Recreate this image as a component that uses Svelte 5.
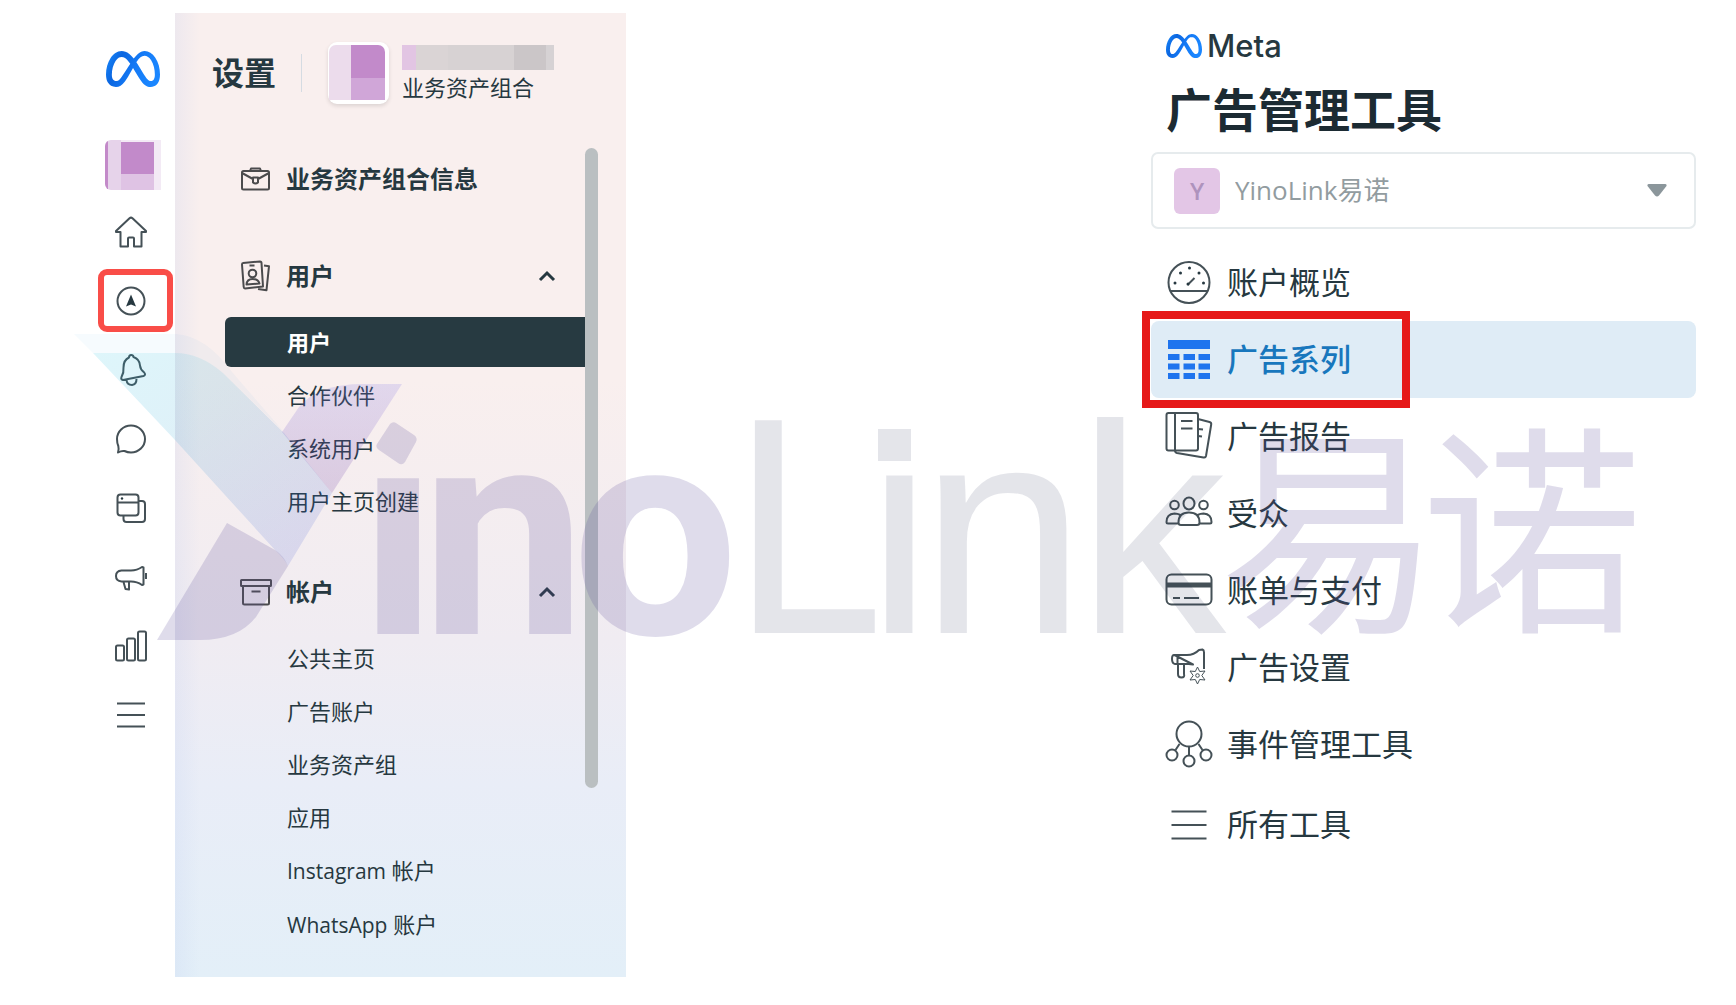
<script>
  const rail = ['home', 'compass', 'bell', 'chat', 'pages', 'megaphone', 'bars', 'menu'];
  const railLabels = ['主页', '广告', '通知', '消息', '内容', '推广', '成效', '菜单'];
  const groups = [
    {
      title: '用户',
      icon: 'badge',
      items: [
        { text: '用户', active: true },
        { text: '合作伙伴' },
        { text: '系统用户' },
        { text: '用户主页创建' }
      ]
    },
    {
      title: '帐户',
      icon: 'archive',
      items: [
        { text: '公共主页' },
        { text: '广告账户' },
        { text: '业务资产组' },
        { text: '应用' },
        { latin: 'Instagram', text: '帐户' },
        { latin: 'WhatsApp', text: '账户' }
      ]
    }
  ];
  const tools = [
    { icon: 'gauge', text: '账户概览' },
    { icon: 'table', text: '广告系列', active: true },
    { icon: 'report', text: '广告报告' },
    { icon: 'people', text: '受众' },
    { icon: 'card', text: '账单与支付' },
    { icon: 'adsettings', text: '广告设置' },
    { icon: 'events', text: '事件管理工具' },
    { icon: 'all', text: '所有工具' }
  ];
</script>

{#snippet meta(id)}
  <svg class="meta" viewBox="0 4 24 16" aria-hidden="true">
    <defs>
      <linearGradient {id} x1="0" y1="0" x2="1" y2="0.3">
        <stop offset="0" stop-color="#1a8cff" />
        <stop offset="0.3" stop-color="#0b66e0" />
        <stop offset="0.6" stop-color="#1479f5" />
        <stop offset="1" stop-color="#1a86ff" />
      </linearGradient>
    </defs>
    <path fill="url(#{id})" d="M6.915 4.03c-1.968 0-3.683 1.28-4.871 3.113C.704 9.208 0 11.883 0 14.449c0 .706.07 1.369.21 1.973a6.624 6.624 0 0 0 .265.86 5.297 5.297 0 0 0 .371.761c.696 1.159 1.818 1.927 3.593 1.927 1.497 0 2.633-.671 3.965-2.444.76-1.012 1.144-1.626 2.663-4.32l.756-1.339.186-.325c.061.1.121.196.183.3l2.152 3.595c.724 1.21 1.665 2.556 2.47 3.314 1.046.987 1.992 1.22 3.06 1.22 1.075 0 1.876-.355 2.455-.843a3.743 3.743 0 0 0 .81-.973c.542-.939.861-2.127.861-3.745 0-2.72-.681-5.357-2.084-7.45-1.282-1.912-2.957-2.93-4.716-2.93-1.047 0-2.088.467-3.053 1.308-.652.57-1.257 1.29-1.82 2.05-.69-.875-1.335-1.547-1.958-2.056-1.182-.966-2.315-1.303-3.454-1.303zm10.16 2.053c1.147 0 2.188.758 2.992 1.999 1.132 1.748 1.647 4.195 1.647 6.4 0 1.548-.368 2.9-1.839 2.9-.58 0-1.027-.23-1.664-1.004-.496-.601-1.343-1.878-2.832-4.358l-.617-1.028a44.908 44.908 0 0 0-1.255-1.98c.07-.109.141-.224.211-.327 1.12-1.667 2.118-2.602 3.358-2.602zm-10.201.553c1.265 0 2.058.791 2.675 1.446.307.327.737.871 1.234 1.579l-1.02 1.566c-.757 1.163-1.882 3.017-2.837 4.338-1.191 1.649-1.81 1.817-2.486 1.817-.524 0-1.038-.237-1.383-.794-.263-.426-.464-1.13-.464-2.046 0-2.221.63-4.535 1.66-6.088.454-.687.964-1.226 1.533-1.533a2.264 2.264 0 0 1 1.088-.285z" />
  </svg>
{/snippet}

{#snippet icon(name)}
  {#if name === 'home'}
    <svg class="i32" viewBox="0 0 32 32"><path d="M1 15 14.500 2.200q1.500-1.200 3 0L31 15v1h-4.500v14.500H19V22.500q0-1-1-1h-4q-1 0-1 1v8H5.500V16H1z" /></svg>
  {:else if name === 'compass'}
    <svg class="i32" viewBox="0 0 32 32"><circle cx="16" cy="16" r="13.500" /><path class="solid" d="M16 9.500 21 21.500 16 19.500 11 21.500z" /></svg>
  {:else if name === 'bell'}
    <svg class="i32" viewBox="0 0 32 32"><path d="M14 3.500q0-2.500 2.200-2.500 2 0 2.300 2 6 2 6.500 8.500.3 4 4.200 7 2 2.500-.7 3.500L8 26q-2.500-.5-1.500-3 2.500-4.500 2-9.500Q8.500 6 14 3.500zM11.500 26q.5 5 5.500 5 4.500-.5 4.500-6" /></svg>
  {:else if name === 'chat'}
    <svg class="i32" viewBox="0 0 32 32"><path d="M3 29.500q1.200-3 .3-6.500-1.300-3-1.300-7a14 13.500 0 1 1 14 13.500q-3.500 0-6.500-1.500-3-.5-6.500 1.500z" /></svg>
  {:else if name === 'pages'}
    <svg class="i32" viewBox="0 0 32 32"><rect x="2.500" y="2.500" width="21" height="21" rx="3" /><path d="M2.500 10.500h21M23.500 9h3.500q3 0 3 3v15q0 3-3 3H11.500q-3 0-3-3v-3" /><circle class="solid" cx="7" cy="6.500" r="1.200" /></svg>
  {:else if name === 'megaphone'}
    <svg class="i32" viewBox="0 0 32 32"><path d="M6.500 9.500H16q6 0 11-3.500l1.500.5v17l-1.500.5q-5-3.500-11-3.500H6.500Q1 20 1 15t5.500-5.500zM8.500 21l2 7 3.500.500V21M31 12v6" /></svg>
  {:else if name === 'bars'}
    <svg class="i32" viewBox="0 0 32 32"><rect x="1" y="15.500" width="8" height="15" rx="1.500" /><rect x="12" y="8.500" width="8" height="22" rx="1.500" /><rect x="23" y="1.500" width="8" height="29" rx="1.500" /></svg>
  {:else if name === 'menu'}
    <svg class="i32" viewBox="0 0 32 32"><path d="M2 4.500h28M2 16h28M2 27.500h28" /></svg>
  {:else if name === 'briefcase'}
    <svg class="i32" viewBox="0 0 32 32"><rect x="2" y="8" width="27" height="18.500" rx="1.500" /><path d="M10 8l1-2.500h9L21 8M2 10l11 6M29 10l-11 6M13 14.500h5v5q-2.500 2-5 0z" /></svg>
  {:else if name === 'badge'}
    <svg class="i32" viewBox="0 0 32 32"><path d="M3 3 20 1.500q1.500 0 1.500 1.500L23 26.500 5 28.500q-1.200 0-1.300-1.500L2 4.500Q2 3 3 3zM24 5.500l5 .7-2.500 24L18 29M9.500 5.500h5" /><circle cx="12.500" cy="13.500" r="3.800" /><path d="M6.500 24.500q.5-5.500 6-5.500t7 4.500z" /></svg>
  {:else if name === 'archive'}
    <svg class="i32" viewBox="0 0 32 32"><rect x="1" y="4" width="30" height="6" rx="0.500" /><path d="M3 10v17q0 1.500 1.500 1.500h23q1.500 0 1.500-1.500V10M11.500 15.500h9" /></svg>
  {:else if name === 'gauge'}
    <svg class="i48" viewBox="0 0 48 48"><circle cx="24" cy="24.500" r="20.500" /><path d="M6 33h36M22.500 27l7-7" /><g class="solid"><circle cx="24.500" cy="10" r="1.500" /><circle cx="15.500" cy="15" r="1.500" /><circle cx="34" cy="15" r="1.500" /><circle cx="10" cy="25" r="1.500" /><circle cx="38.500" cy="25" r="1.500" /><circle cx="23" cy="26" r="1.500" /></g></svg>
  {:else if name === 'table'}
    <svg class="i48 blue" viewBox="0 0 48 48"><path d="M3 5h42v9H3zM3 19h11.500v6H3zM18.500 19H30v6H18.500zM33.500 19H45v6H33.500zM3 28.500h11.500v6H3zM18.500 28.500H30v6H18.500zM33.500 28.500H45v6H33.500zM3 38h11.500v6H3zM18.500 38H30v6H18.500zM33.500 38H45v6H33.500z" /></svg>
  {:else if name === 'report'}
    <svg class="i48" viewBox="0 0 48 48"><rect x="1.500" y="1" width="31.500" height="37.500" rx="2" /><path d="M10 1v37.500M16 9h11.500M16 16.500h11.500M33 7l11.500 3q2 .500 1.700 2.500L41 44q-.5 2-2.500 1.500L12 41q-2-.5-2-2.500M33 17l5 .500M33 24l4 .500" /></svg>
  {:else if name === 'people'}
    <svg class="i48" viewBox="0 0 48 48"><ellipse cx="24" cy="14.500" rx="5.500" ry="6" /><circle cx="9.500" cy="16" r="4.300" /><circle cx="38.500" cy="16" r="4.300" /><path d="M13.500 33.500q0-10 10.500-10t10.500 10q0 2.500-2.500 2.500H16q-2.500 0-2.500-2.500zM15.500 26q-3-1.500-6-1.500-8 .5-8 8.500 0 1.500 1.500 1.500h10.500M32.500 26q3-1.500 6-1.500 8 .5 8 8.500 0 1.500-1.500 1.500H34.500" /></svg>
  {:else if name === 'card'}
    <svg class="i48" viewBox="0 0 48 48"><rect x="1.500" y="8.500" width="45" height="30" rx="5" /><path d="M8 32h7M19 32h15" /><path class="band" d="M1.500 19h45" /></svg>
  {:else if name === 'adsettings'}
    <svg class="i48" viewBox="0 0 48 48"><path d="M9.500 12H22q7 0 12-5l3.500-.5q1.500.5 1.500 3V26M28 21.500q-2-.5-4.500-.5H10Q7 20.500 7 16t2.500-4zM12.500 12v8M13 20.500V31q0 3.500 3.500 3.500T19 31V21" /><path class="thin" d="M32.500 24l2.200 4.500 5.300-.5-3.200 4.500 3.200 4.500-5.300-.5-2.200 4.500-2.200-4.500-5.300.5 3.200-4.500-3.200-4.500 5.300.5z" /><circle class="thin" cx="32.500" cy="32.500" r="1.800" /></svg>
  {:else if name === 'events'}
    <svg class="i48" viewBox="0 0 48 48"><circle cx="24" cy="14" r="12.500" /><path d="M24 26.500v9M14.500 24l-4 6M33.500 24l4 6" /><circle cx="7" cy="35" r="5.500" /><circle cx="41" cy="35" r="5.500" /><circle cx="24" cy="41" r="5.500" /></svg>
  {:else if name === 'all'}
    <svg class="i48" viewBox="0 0 48 48"><path d="M6.500 11.500h35M6.500 25h35M6.500 38.500h35" /></svg>
  {/if}
{/snippet}

<div class="page">
  <nav class="rail" aria-label="主导航">
    <div class="brand">{@render meta('meta-rail')}</div>
    <div class="mosaic"></div>
    {#each rail as name, n}
      <button class="rail-item" class:marked={name === 'compass'} aria-label={railLabels[n]}>
        {@render icon(name)}
      </button>
    {/each}
  </nav>

  <section class="settings">
    <header>
      <h1>设置</h1>
      <div class="avatar"><div class="avatar-fill"></div></div>
      <div class="account">
        <div class="redacted"></div>
        <span>业务资产组合</span>
      </div>
    </header>
    <div class="scroll">
      <nav aria-label="设置">
        <a class="head info" href="#info">{@render icon('briefcase')}<span>业务资产组合信息</span></a>
        {#each groups as g}
          <button class="head toggle" aria-expanded="true">
            {@render icon(g.icon)}<span>{g.title}</span>
            <svg class="chevron" viewBox="0 0 18 12"><path d="M2 10l7-7 7 7" /></svg>
          </button>
          <ul>
            {#each g.items as item}
              <li>
                <a href="#item" class:active={item.active}>
                  {#if item.latin}<span class="latin">{item.latin}</span>{' '}{/if}{item.text}
                </a>
              </li>
            {/each}
          </ul>
        {/each}
      </nav>
      <div class="thumb"></div>
    </div>
  </section>

  <section class="manager">
    <div class="meta-brand">{@render meta('meta-manager')}<span>Meta</span></div>
    <h2>广告管理工具</h2>
    <div class="picker">
      <span class="initial">Y</span>
      <select aria-label="账户"><option>YinoLink易诺</option></select>
      <svg class="caret" viewBox="0 0 20 13"><path d="M2 0h16q2 0 1.500 2L12 11.500q-2 2-4 0L.5 2Q0 0 2 0z" /></svg>
    </div>
    <nav aria-label="广告管理工具">
      {#each tools as t}
        <a href="#tool" class="tool" class:current={t.active}>{@render icon(t.icon)}<span>{t.text}</span></a>
      {/each}
    </nav>
  </section>

  <svg class="watermark" viewBox="0 0 1736 1005" aria-hidden="true">
    <defs>
      <linearGradient id="wm-blue" x1="0" y1="0" x2="0.9" y2="1">
        <stop offset="0" stop-color="#00b8dc" stop-opacity="0.13" />
        <stop offset="0.4" stop-color="#28a0d2" stop-opacity="0.15" />
        <stop offset="1" stop-color="#4650d2" stop-opacity="0.15" />
      </linearGradient>
      <linearGradient id="wm-violet" x1="0" y1="0" x2="0" y2="1">
        <stop offset="0" stop-color="#8278e6" stop-opacity="0.2" />
        <stop offset="1" stop-color="#6e3ca0" stop-opacity="0.2" />
      </linearGradient>
    </defs>
    <path class="wm-pale" d="M74 334H176Q206 336 232 372L284 432 223 373Q200 353 175 353H93z" />
    <path fill="url(#wm-blue)" d="M93 353H175Q200 353 223 373L284 433 332 493 288 566Q284 558 275 550L175 440z" />
    <path fill="url(#wm-violet)" d="M282 432 299 407Q318 384 363 384H402L332 493z" />
    <path class="wm-purple" d="M227 523 275 550Q284 556 288 566L256 617Q238 640 200 640H157z" />
    <path class="wm-purple" d="M390 424q3-3 6-1l18 12q4 3 2 7l-11 20q-3 4-7 1l-19-13q-4-3-2-6z" />
    <g class="wm-purple wm-bold">
      <text x="358" y="634">ı</text>
      <text x="421" y="634">n</text>
      <text x="572" y="634">o</text>
    </g>
    <g class="wm-grey">
      <text class="wm-cap" x="726" y="633">L</text>
      <text x="858" y="633">ı</text>
      <text x="920" y="633">n</text>
      <text x="1077" y="633">k</text>
      <path d="M878 429h33v32h-33z" />
    </g>
    <g class="wm-purple wm-cjk">
      <text x="1219" y="615">易</text>
      <text x="1421" y="615">诺</text>
    </g>
  </svg>
</div>

<style>
  :global(body) {
    margin: 0;
    background: #fff;
  }
  .page {
    position: relative;
    box-sizing: border-box;
    display: grid;
    grid-template-columns: 85px 451fr 525fr 545fr;
    align-items: start;
    min-height: 100vh;
    padding: 13px 40px 24px 90px;
    color: #263840;
    font-family: 'Open Sans', 'Noto Sans CJK SC', sans-serif;
  }
  a {
    color: inherit;
    text-decoration: none;
  }
  button {
    padding: 0;
    border: 0;
    background: none;
    color: inherit;
    font: inherit;
  }
  svg {
    display: block;
    flex: none;
  }
  .i32,
  .i48 {
    fill: none;
    stroke: #455157;
    stroke-width: 2;
    stroke-linejoin: round;
  }
  .i32 {
    width: 32px;
    height: 32px;
  }
  .i48 {
    width: 48px;
    height: 48px;
  }
  .solid {
    fill: #263840;
    stroke: none;
  }
  .band {
    stroke-width: 5;
  }
  .thin {
    stroke-width: 1;
  }
  .blue {
    fill: #1f74ee;
    stroke: none;
  }

  .rail {
    display: flex;
    flex-direction: column;
    align-items: center;
    padding: 38px 3px 0 0;
  }
  .brand {
    padding-left: 3px;
  }
  .brand .meta {
    width: 54px;
    height: 36px;
  }
  .mosaic {
    width: 56px;
    height: 50px;
    margin: 53px 0 7px 4px;
    background:
      linear-gradient(#c38ac9, #c38ac9) 0 0 / 3px 100% no-repeat,
      linear-gradient(#c28aca, #c28aca) 16px 2px / 33px 32px no-repeat,
      linear-gradient(#dfc3e4, #dfc3e4) 16px 34px / 33px 16px no-repeat,
      linear-gradient(#e6d3ea, #e6d3ea) 3px 0 / 13px 100% no-repeat,
      #f3eaf5;
    border-radius: 6px 0 0 6px;
  }
  .rail-item {
    position: relative;
    display: grid;
    place-items: center;
    width: 82px;
    height: 69px;
  }
  .marked::after {
    content: '';
    position: absolute;
    inset: 3px -1px 3px 8px;
    border: 6px solid #f94d48;
    border-radius: 9px;
  }

  .settings {
    padding-bottom: 25px;
    background:
      linear-gradient(90deg, rgba(190, 205, 240, 0.2), rgba(190, 205, 240, 0) 25px),
      linear-gradient(#f9efee, #f9efee 38%, #f0ecf2 65%, #e9edf7 80%, #e3eff8);
  }
  header {
    display: flex;
    align-items: center;
    box-sizing: border-box;
    height: 135px;
    padding: 0 0 16px 37px;
  }
  h1 {
    margin: 0;
    padding-right: 25px;
    border-right: 1px solid #d5dbe2;
    font-size: 32px;
    line-height: 38px;
  }
  .avatar {
    box-sizing: border-box;
    width: 61px;
    height: 62px;
    margin: 0 13px 0 26px;
    padding: 3px 4px 4px 1px;
    background: #fff;
    border-radius: 9px;
    box-shadow: 0 2px 4px rgba(0, 0, 0, 0.12);
  }
  .avatar-fill {
    height: 100%;
    background:
      linear-gradient(#ecdcec, #ecdcec) 0 0 / 22px 100% no-repeat,
      linear-gradient(#c28aca 60%, #d0a6d8 60%);
    border-radius: 7px 7px 0 0;
  }
  .account {
    padding-top: 3px;
  }
  .account span {
    display: block;
    font-size: 22px;
    line-height: 32px;
  }
  .redacted {
    width: 152px;
    height: 25px;
    margin-bottom: 1px;
    background: linear-gradient(90deg, #e2c5e3 14px, #dad4d5 14px 46px, #d7d2d3 46px 112px, #cbc6c8 112px 144px, #d6d2d4 144px);
  }
  .scroll {
    display: flex;
    padding: 0 28px 0 50px;
  }
  .scroll nav {
    flex: 1;
  }
  .head {
    display: flex;
    align-items: center;
    gap: 14px;
    box-sizing: border-box;
    width: 100%;
    height: 70px;
    padding-left: 15px;
    font-size: 24px;
    font-weight: 700;
    text-align: left;
  }
  .head span {
    padding-bottom: 4px;
  }
  .info {
    height: 62px;
    margin-bottom: 31px;
  }
  .head .i32 {
    stroke: #4b4b4d;
  }
  .chevron {
    width: 18px;
    height: 12px;
    margin: 0 29px 0 auto;
    fill: none;
    stroke: #263840;
    stroke-width: 3;
  }
  ul {
    margin: 0;
    padding: 6px 0 29px;
    list-style: none;
  }
  ul:last-child {
    padding: 5px 0 0;
  }
  li a {
    display: block;
    padding-left: 62px;
    font-size: 22px;
    line-height: 53px;
  }
  .latin {
    font-size: 21px;
  }
  li .active {
    margin-bottom: 2px;
    line-height: 50px;
    background: #273a41;
    border-radius: 6px 0 0 6px;
    color: #fff;
    font-weight: 700;
  }
  .thumb {
    width: 13px;
    height: 640px;
    background: #babfc1;
    border-radius: 7px;
  }

  .manager {
    grid-column: 4;
    padding-top: 17px;
  }
  .meta-brand {
    display: flex;
    align-items: center;
    gap: 5px;
    padding-left: 15px;
    font: 500 31px/32px Inter, sans-serif;
  }
  .meta-brand .meta {
    width: 36px;
    height: 24px;
  }
  h2 {
    margin: 17px 0 13px 15px;
    color: #1c2b33;
    font-size: 46px;
    line-height: 60px;
  }
  .picker {
    display: flex;
    align-items: center;
    box-sizing: border-box;
    height: 77px;
    margin-bottom: 15px;
    padding: 0 27px 0 21px;
    border: 2px solid #e6ebed;
    border-radius: 7px;
  }
  .initial {
    width: 46px;
    margin-right: 15px;
    background: #e3c6e6;
    border-radius: 6px;
    color: #ae93bd;
    font-size: 24px;
    font-weight: 600;
    line-height: 46px;
    text-align: center;
  }
  select {
    flex: 1;
    height: 60px;
    padding: 0 0 2px;
    border: 0;
    appearance: none;
    background: none;
    color: #929ca0;
    font: inherit;
    font-size: 26px;
  }
  .caret {
    width: 20px;
    height: 13px;
    fill: #8b969b;
  }
  .tool {
    position: relative;
    display: flex;
    align-items: center;
    gap: 14px;
    box-sizing: border-box;
    height: 77px;
    padding: 0 0 2px 14px;
    border-radius: 8px;
    font-size: 31px;
  }
  .tool span {
    padding-bottom: 2px;
  }
  .tool:last-child {
    margin-top: 3px;
  }
  .current {
    background: #dfecf6;
    color: #1877bd;
    font-weight: 500;
  }
  .current::after {
    content: '';
    position: absolute;
    top: -10px;
    bottom: -10px;
    left: -9px;
    width: 252px;
    border: 8px solid #e61919;
  }

  .watermark {
    position: absolute;
    top: 0;
    left: 0;
    width: 100%;
    pointer-events: none;
  }
  .wm-pale {
    fill: #1e96dc;
    fill-opacity: 0.04;
  }
  .wm-purple {
    fill: #5f509b;
    fill-opacity: 0.2;
  }
  .wm-bold {
    font: 700 295px Roboto, sans-serif;
  }
  .wm-grey {
    fill: #1e2850;
    fill-opacity: 0.12;
    font: 298px 'Liberation Sans', sans-serif;
  }
  .wm-cap {
    font-family: 'Noto Sans', sans-serif;
  }
  .wm-cjk {
    font: 400 222px 'Noto Sans CJK SC', sans-serif;
  }
</style>
